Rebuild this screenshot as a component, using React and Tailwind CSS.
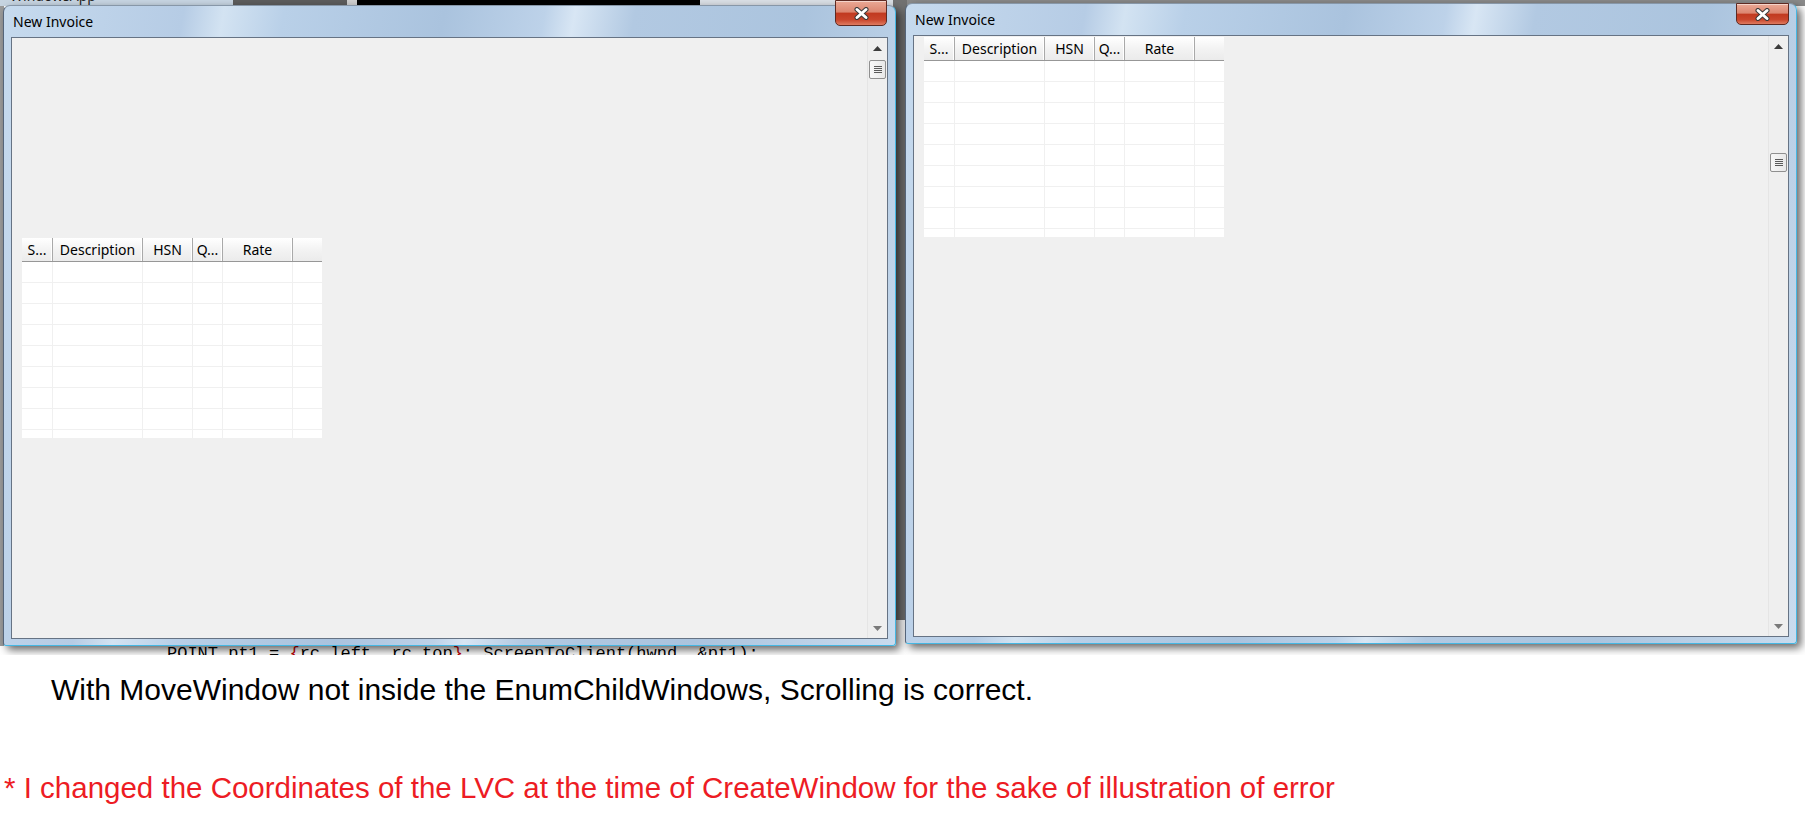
import React from 'react';

const COLS = ['w-[31px]', 'w-[90px]', 'w-[50px]', 'w-[30px]', 'w-[70px]'];
const HEAD = ['S...', 'Description', 'HSN', 'Q...', 'Rate'];

const ListView = ({ className }) => (
  <div className={`w-[300px] h-[200px] shrink-0 overflow-hidden bg-white ${className}`}>
    <div className="flex h-[24px] border-b border-[#979797] bg-[linear-gradient(#ffffff,#f3f3f3_50%,#ebebeb)]">
      {HEAD.map((h, i) => (
        <div key={h} className={`${COLS[i]} shrink-0 flex items-center justify-center border-r border-[#a9a9a9] shadow-[inset_-1px_0_0_#ffffff] text-[14px] text-black`}>
          {h}
        </div>
      ))}
      <div className="flex-1" />
    </div>
    {Array.from({ length: 9 }).map((_, r) => (
      <div key={r} className="flex h-[21px] border-b border-[#f0f0f0]">
        {COLS.map((c) => (
          <div key={c} className={`${c} shrink-0 border-r border-[#f0f0f0]`} />
        ))}
        <div className="flex-1" />
      </div>
    ))}
  </div>
);

const CloseBtn = ({ className }) => (
  <div className={`absolute flex items-center justify-center rounded-b-[5px] border border-[#5e2a22] bg-[linear-gradient(#eaa996_0%,#dc8670_45%,#c13a20_52%,#c9462c_78%,#df7b60_100%)] shadow-[inset_0_1px_0_rgba(255,255,255,0.5)] ${className}`}>
    <svg width="15" height="13" viewBox="0 0 15 13">
      <path d="M3 2.5 L12 10.5 M12 2.5 L3 10.5" stroke="#3a3a3a" strokeWidth="5" strokeLinecap="round" />
      <path d="M3 2.5 L12 10.5 M12 2.5 L3 10.5" stroke="#ffffff" strokeWidth="3" strokeLinecap="round" />
    </svg>
  </div>
);

const ScrollBar = ({ thumbClass }) => (
  <div className="w-[20px] shrink-0 flex flex-col border-l border-[#e5e5e5] bg-[#efefef]">
    <div className="h-[20px] flex items-center justify-center">
      <svg width="9" height="5" viewBox="0 0 9 5"><path d="M0 5 L4.5 0 L9 5Z" fill="#3c3c3c" /></svg>
    </div>
    <div className={`mx-px h-[19px] flex flex-col items-center justify-center gap-px rounded-[2px] border border-[#8f8f8f] bg-[linear-gradient(90deg,#f7f7f7,#e8e8e8)] ${thumbClass}`}>
      <div className="h-px w-[8px] bg-[#5a5a5a]" />
      <div className="h-px w-[8px] bg-[#5a5a5a]" />
      <div className="h-px w-[8px] bg-[#5a5a5a]" />
      <div className="h-px w-[8px] bg-[#5a5a5a]" />
    </div>
    <div className="flex-1" />
    <div className="h-[20px] flex items-center justify-center">
      <svg width="9" height="5" viewBox="0 0 9 5"><path d="M0 0 L4.5 5 L9 0Z" fill="#7a7a7a" /></svg>
    </div>
  </div>
);

const Win = ({ className, closeClass, thumbClass, listClass }) => (
  <div className={`absolute flex flex-col rounded-t-[7px] rounded-b-[3px] border border-[#55657a] border-t-[#8797a8] border-r-[#45b7e3] border-b-[#45b7e3] px-[7px] pb-[6px] bg-[linear-gradient(100deg,#c6daee_0%,#b6cce5_18%,#d3e3f2_22%,#b9d0e8_28%,#aac3de_44%,#bdd2e9_54%,#d8e6f4_57%,#b2c9e2_63%,#abc4de_80%,#c9dbee_100%)] shadow-[4px_4px_9px_rgba(0,0,0,0.6)] ${className}`}>
    <div className="relative h-[31px] shrink-0 flex items-center pl-[2px]">
      <span className="text-[14px] text-black">New Invoice</span>
      <CloseBtn className={closeClass} />
    </div>
    <div className="flex flex-1 min-h-0 border border-[#667384] bg-[#f0f0f0]">
      <div className="flex-1 min-w-0 overflow-hidden pl-[10px]">
        <ListView className={listClass} />
      </div>
      <ScrollBar thumbClass={thumbClass} />
    </div>
  </div>
);

export default function App() {
  return (
    <div className="w-[1812px] h-[840px] overflow-hidden bg-white font-['Noto_Sans',sans-serif]">
      {/* captured desktop */}
      <div className="relative w-[1805px] h-[655px] overflow-hidden bg-white">
        <div className="flex h-[6px]">
          <div className="w-[233px] overflow-hidden bg-[#c6d4e1]">
            <div className="-mt-[11px] pl-[10px] text-[14px] leading-[14px] text-[#1e1e1e]">WindowsApp</div>
          </div>
          <div className="w-[114px] bg-[#5c5c5c]" />
          <div className="w-[10px] bg-[#cfcfcf]" />
          <div className="w-[343px] bg-black" />
          <div className="w-[205px] bg-[#d9dee4]" />
          <div className="flex-1 bg-[#8a8a8a]" />
        </div>
        <div className="absolute left-0 top-[6px] w-[4px] h-[640px] bg-[#9a9a9a]" />
        <div className="absolute left-[893px] top-0 w-[14px] h-[620px] bg-[#727272]" />
        <div className="absolute left-[167px] top-[645px] whitespace-pre font-['Liberation_Mono',monospace] text-[17px] leading-[17px] text-black">
          POINT pt1 = <span className="text-[#c00000]">{'{'}</span>rc.left, rc.top<span className="text-[#c00000]">{'}'}</span>; ScreenToClient(hwnd, &amp;pt1);
        </div>

        <Win
          className="left-[3px] top-[5px] w-[893px] h-[641px]"
          closeClass="right-[1px] -top-[6px] w-[52px] h-[26px]"
          thumbClass="mt-[2px]"
          listClass="mt-[200px]"
        />
        <Win
          className="left-[905px] top-[3px] w-[892px] h-[641px]"
          closeClass="right-0 -top-[1px] w-[53px] h-[22px]"
          thumbClass="mt-[97px]"
          listClass="mt-px"
        />
      </div>

      <div className="font-['Liberation_Sans',Arial,sans-serif]">
        <p className="mt-[19px] pl-[51px] text-[30px] leading-[32px] text-black">
          With MoveWindow not inside the EnumChildWindows, Scrolling is correct.
        </p>
        <p className="mt-[66px] pl-[4px] text-[29.5px] leading-[32px] text-[#ed1c24]">
          * I changed the Coordinates of the LVC at the time of CreateWindow for the sake of illustration of error
        </p>
      </div>
    </div>
  );
}
